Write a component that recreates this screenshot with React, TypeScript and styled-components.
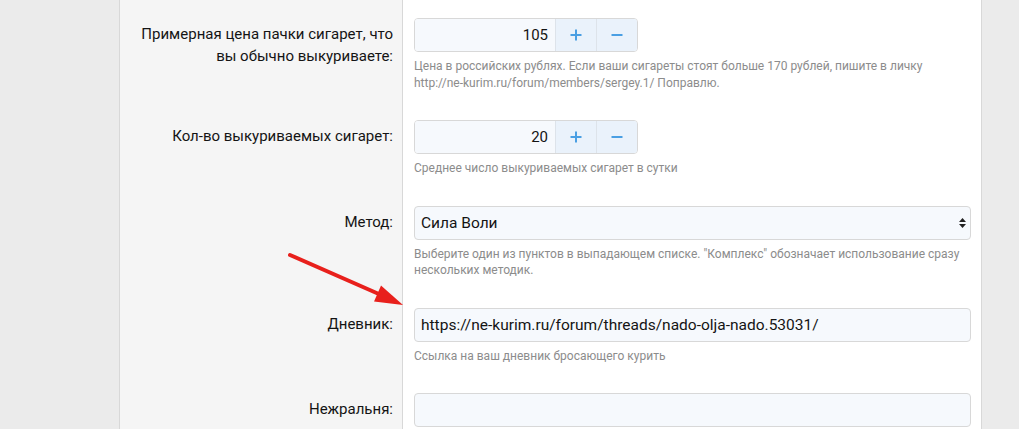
import React from "react";
import styled, { createGlobalStyle } from "styled-components";

const GlobalStyle = createGlobalStyle`
  html, body { margin: 0; padding: 0; background: #ebebeb; }
  body { font-family: Roboto, "Open Sans", sans-serif; }
  * { box-sizing: border-box; }
`;

const Page = styled.div`
  position: relative;
  width: 1019px;
  height: 429px;
  overflow: hidden;
  padding-left: 119px;
`;

const Panel = styled.div`
  width: 863px;
  min-height: 429px;
  background: #fff;
  border-left: 1px solid #d8d8d8;
  border-right: 1px solid #d8d8d8;
  display: flex;
  flex-direction: column;
`;

const TopFiller = styled.div`
  display: grid;
  grid-template-columns: 283px 1fr;
  height: 8px;
  &::before {
    content: "";
    background: #f5f5f5;
    border-right: 1px solid #d8d8d8;
  }
`;

const Row = styled.div`
  display: grid;
  grid-template-columns: 283px 1fr;
`;

const Label = styled.div`
  background: #f5f5f5;
  border-right: 1px solid #d8d8d8;
  padding: 15px 9px 0 9px;
  text-align: right;
  font-size: 15px;
  line-height: 22px;
  color: #141414;
  white-space: nowrap;
`;

const Field = styled.div`
  padding: 10px 10px 19px 11px;
`;

const Hint = styled.div`
  margin-top: 6px;
  font-size: 12px;
  line-height: 16.5px;
  color: #8c8c8c;
  white-space: nowrap;
`;

const Spinner = styled.div`
  display: flex;
  width: 224px;
  height: 34px;
  border: 1px solid #d8d8d8;
  border-radius: 4px;
  overflow: hidden;
`;

const NumberValue = styled.div`
  flex: 1;
  background: #f6f9fd;
  text-align: right;
  padding-right: 7px;
  font-size: 15px;
  line-height: 32px;
  color: #141414;
`;

const StepButton = styled.div`
  width: 41px;
  background: #eaf2fb;
  border-left: 1px solid #dde3ea;
  display: flex;
  align-items: center;
  justify-content: center;
`;

const TextBox = styled.div`
  height: 34px;
  border: 1px solid #d8d8d8;
  border-radius: 4px;
  background: #f6f9fd;
  padding: 0 6px;
  font-size: 15.5px;
  line-height: 32px;
  color: #141414;
  white-space: nowrap;
`;

const SelectBox = styled(TextBox)`
  display: flex;
  align-items: center;
  justify-content: space-between;
  padding-right: 4px;
`;

const ArrowOverlay = styled.svg`
  position: absolute;
  left: 0;
  top: 0;
  pointer-events: none;
`;

const PlusIcon = () => (
  <svg width="12" height="12" viewBox="0 0 12 12">
    <path d="M6 0.5V11.5M0.5 6H11.5" stroke="#4a9fe3" strokeWidth="2" />
  </svg>
);

const MinusIcon = () => (
  <svg width="12" height="12" viewBox="0 0 12 12">
    <path d="M0.5 6H11.5" stroke="#4a9fe3" strokeWidth="2" />
  </svg>
);

const SelectArrows = () => (
  <svg width="7" height="10" viewBox="0 0 7 10">
    <path d="M3.5 0L7 4H0Z M0 6H7L3.5 10Z" fill="#222" />
  </svg>
);

const NumberField = ({ value }: { value: string }) => (
  <Spinner>
    <NumberValue>{value}</NumberValue>
    <StepButton>
      <PlusIcon />
    </StepButton>
    <StepButton>
      <MinusIcon />
    </StepButton>
  </Spinner>
);

export default function App() {
  return (
    <>
      <GlobalStyle />
      <Page>
        <Panel>
          <TopFiller />
          <Row>
            <Label>
              Примерная цена пачки сигарет, что
              <br />
              вы обычно выкуриваете:
            </Label>
            <Field>
              <NumberField value="105" />
              <Hint>
                Цена в российских рублях. Если ваши сигареты стоят больше 170 рублей, пишите в личку
                <br />
                http://ne-kurim.ru/forum/members/sergey.1/ Поправлю.
              </Hint>
            </Field>
          </Row>
          <Row>
            <Label>Кол-во выкуриваемых сигарет:</Label>
            <Field>
              <NumberField value="20" />
              <Hint>Среднее число выкуриваемых сигарет в сутки</Hint>
            </Field>
          </Row>
          <Row>
            <Label>Метод:</Label>
            <Field>
              <SelectBox>
                <span>Сила Воли</span>
                <SelectArrows />
              </SelectBox>
              <Hint>
                Выберите один из пунктов в выпадающем списке. "Комплекс" обозначает использование сразу
                <br />
                нескольких методик.
              </Hint>
            </Field>
          </Row>
          <Row>
            <Label>Дневник:</Label>
            <Field>
              <TextBox>https://ne-kurim.ru/forum/threads/nado-olja-nado.53031/</TextBox>
              <Hint>Ссылка на ваш дневник бросающего курить</Hint>
            </Field>
          </Row>
          <Row>
            <Label>Нежральня:</Label>
            <Field>
              <TextBox />
            </Field>
          </Row>
        </Panel>
        <ArrowOverlay width="1019" height="429" viewBox="0 0 1019 429">
          <line x1="290" y1="255" x2="380" y2="294.5" stroke="#e8201c" strokeWidth="4" strokeLinecap="round" />
          <path d="M403 305 L374 301.5 L381 285.5 Z" fill="#e8201c" />
        </ArrowOverlay>
      </Page>
    </>
  );
}
